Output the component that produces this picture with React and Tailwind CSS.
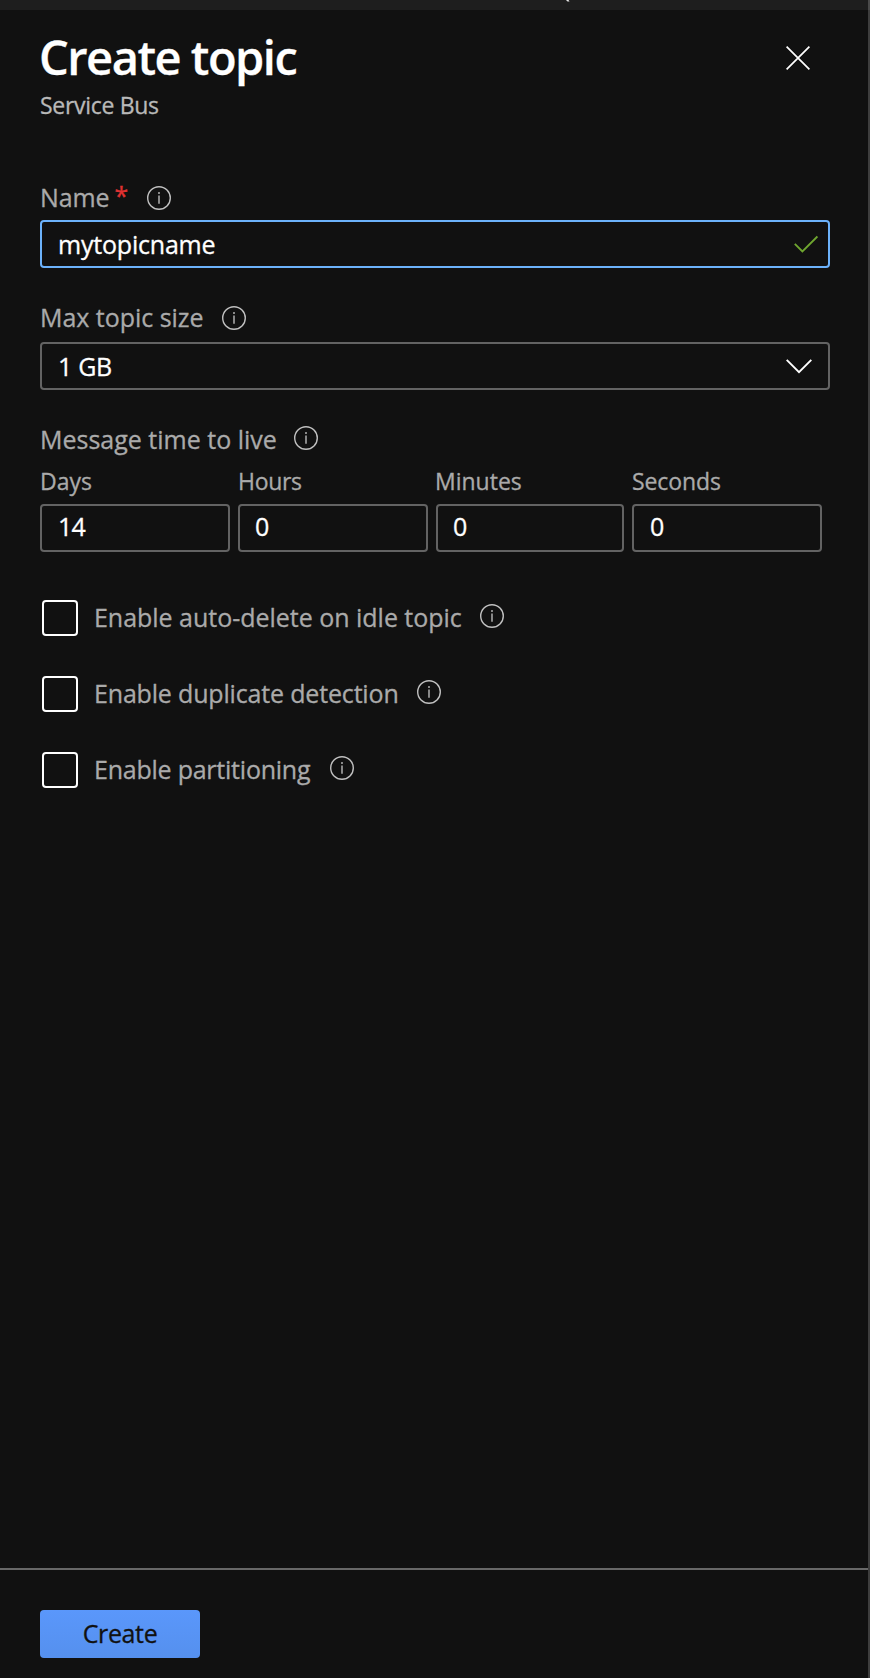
function InfoIcon({ className = '' }) {
  return (
    <svg className={`size-6 shrink-0 ${className}`} viewBox="0 0 24 24" fill="none" aria-label="Info">
      <circle cx="12" cy="12" r="11.3" stroke="#c0c0c0" strokeWidth="1.4" />
      <path d="M12 9.6V17.8" stroke="#b0b0b0" strokeWidth="1.5" />
      <circle cx="12" cy="7" r="0.95" fill="#bcbcbc" />
    </svg>
  );
}

function TimeField({ label, value, width, spacing, valueSpacing = 'pl-[15px]' }) {
  return (
    <div className={width}>
      <div className={`h-8 text-[23px] leading-8 text-[#aaa] ${spacing}`}>{label}</div>
      <div
        className={`mt-[7px] h-12 rounded-[4px] border-2 border-[#636363] text-[25px] leading-[41px] tracking-[-0.8px] text-white ${valueSpacing}`}
      >
        {value}
      </div>
    </div>
  );
}

function CheckRow({ label, spacing, gap }) {
  return (
    <div className={`ml-0.5 flex h-9 items-center ${gap}`}>
      <div className="flex items-center gap-4">
        <div className="size-9 shrink-0 rounded-[4px] border-2 border-white" />
        <span className={`-mt-[3px] text-[25px] leading-9 whitespace-nowrap text-[#aaa] ${spacing}`}>{label}</span>
      </div>
      <InfoIcon className="-mt-1" />
    </div>
  );
}

export default function App() {
  return (
    <div className="flex h-[1678px] w-[870px] flex-col bg-[#111] font-['Open_Sans','Noto_Sans',sans-serif] [-webkit-text-stroke-width:0.3px]">
      <div className="flex h-2.5 shrink-0 items-start border-r-2 border-[#4a4a4a] bg-[#1e1e1e]">
        <svg className="ml-[566px] h-0.5 w-1" viewBox="0 0 4 2">
          <path d="M0 0H2.5L3.5 1.6H1.5Z" fill="#e8e8e8" />
        </svg>
      </div>

      <div className="flex flex-1 flex-col border-r-2 border-[#3e3e3e]">
        <header className="flex h-[170px] items-start justify-between pt-[19px] pr-[68px] pl-[39px]">
          <div>
            <h1 className="h-14 text-[47px] leading-[56px] font-semibold tracking-[-1.5px] text-white">Create topic</h1>
            <p className="mt-[5px] pl-px text-[23px] leading-[30px] tracking-[-0.31px] text-[#b9b9b9]">Service Bus</p>
          </div>
          <svg className="mt-[17px] mr-[-10px] size-6" viewBox="0 0 24 24" fill="none" stroke="#fff" strokeWidth="1.7">
            <path d="M0.6 0.6L23.4 23.4M23.4 0.6L0.6 23.4" />
          </svg>
        </header>

        <main className="w-[830px] flex-1 pl-10">
          <div className="flex h-[34px] items-center">
            <span className="text-[25px] leading-[34px] tracking-[-0.1px] text-[#aaa]">Name</span>
            <span className="-mt-1 ml-[5px] text-[25px] leading-[34px] text-[#e03232]">*</span>
            <InfoIcon className="mt-0.5 ml-[19px]" />
          </div>
          <div className="mt-1.5 flex h-12 items-center justify-between rounded-[4px] border-2 border-[#6cb2fb] pr-2.5 pl-4">
            <span className="text-[25px] leading-[44px] tracking-[-0.2px] text-white">mytopicname</span>
            <svg className="size-6" viewBox="0 0 24 24" fill="none" stroke="#6fa62f" strokeWidth="1.9">
              <path d="M0.8 11.8L8.4 19.4L23.4 4.4" />
            </svg>
          </div>

          <div className="mt-[33px] flex h-[34px] items-center">
            <span className="-mt-0.5 text-[25px] leading-[34px] tracking-[-0.03px] text-[#aaa]">Max topic size</span>
            <InfoIcon className="ml-[18px]" />
          </div>
          <div className="mt-[7px] flex h-12 items-center justify-between rounded-[4px] border-2 border-[#636363] pr-4 pl-4">
            <span className="text-[25px] leading-[44px] tracking-[-0.32px] text-white">1 GB</span>
            <svg className="h-[15px] w-[26px]" viewBox="0 0 26 15" fill="none" stroke="#fff" strokeWidth="1.9">
              <path d="M0.7 0.8L13 13.1L25.3 0.8" />
            </svg>
          </div>

          <div className="mt-8 flex h-[34px] items-center">
            <span className="text-[25px] leading-[34px] text-[#aaa]">Message time to live</span>
            <InfoIcon className="-mt-0.5 ml-[17px]" />
          </div>
          <div className="mt-[9px] flex gap-2">
            <TimeField label="Days" value="14" width="w-[190px]" spacing="" valueSpacing="pl-4" />
            <TimeField label="Hours" value="0" width="w-[190px]" spacing="tracking-[-0.32px]" />
            <TimeField label="Minutes" value="0" width="w-[188px]" spacing="-ml-px" />
            <TimeField label="Seconds" value="0" width="w-[190px]" spacing="tracking-[-0.09px]" valueSpacing="pl-4" />
          </div>

          <div className="mt-12 flex flex-col gap-10">
            <CheckRow label="Enable auto-delete on idle topic" spacing="tracking-[-0.02px]" gap="gap-[18px]" />
            <CheckRow label="Enable duplicate detection" spacing="tracking-[-0.17px]" gap="gap-[18px]" />
            <CheckRow label="Enable partitioning" spacing="tracking-[-0.23px]" gap="gap-5" />
          </div>
        </main>

        <footer className="h-[110px] shrink-0 border-t-2 border-[#686868] pt-10 pl-10">
          <button className="block h-12 w-40 rounded-[4px] bg-linear-to-b from-[#5a97fb] to-[#5590ee] pb-0.5 text-[25px] leading-[46px] tracking-[-0.36px] text-[#111] [-webkit-text-stroke-width:0.3px]">
            Create
          </button>
        </footer>
      </div>
    </div>
  );
}
